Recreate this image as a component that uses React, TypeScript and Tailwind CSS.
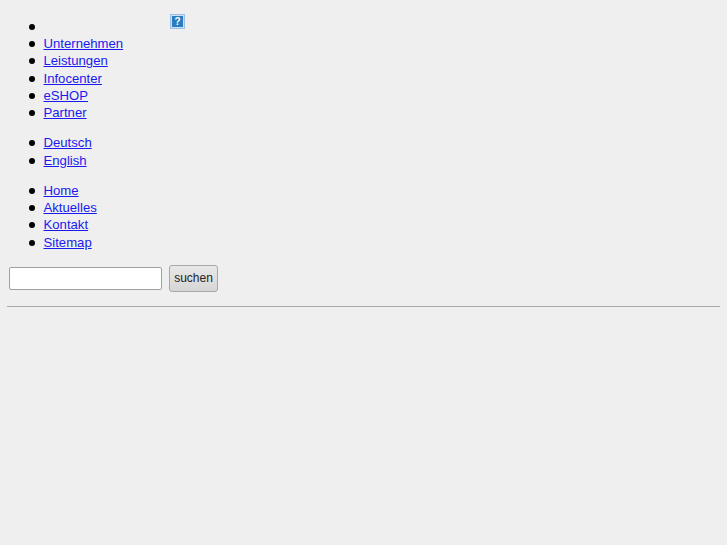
const mainNav = ['Unternehmen', 'Leistungen', 'Infocenter', 'eSHOP', 'Partner'];
const langNav = ['Deutsch', 'English'];
const metaNav = ['Home', 'Aktuelles', 'Kontakt', 'Sitemap'];

function Bullet() {
    return <span className="mr-[9px] h-[6px] w-[6px] shrink-0 rounded-full bg-black" />;
}

function NavLink({ label }: { label: string }) {
    return (
        <li className="flex h-[17.33px] items-center">
            <Bullet />
            <a href="#" className="text-[#1a1aee] underline">{label}</a>
        </li>
    );
}

function HelpIcon() {
    return (
        <svg width="15" height="15" viewBox="0 0 15 15" className="ml-[126.5px] mt-[-4px] self-start">
            <rect x="0.5" y="0.5" width="14" height="14" fill="#cfe0f2" stroke="#9cc0e4" />
            <rect x="2" y="2" width="11" height="11" fill="#2a7cc0" />
            <text x="7.5" y="11" textAnchor="middle" fontSize="10" fontWeight="700" fill="#ffffff" fontFamily="Liberation Sans, sans-serif">?</text>
        </svg>
    );
}

export default function App() {
    return (
        <div className="min-h-[545px] bg-[#efefef] px-[7px] pt-[18px] font-['Liberation_Sans',sans-serif] text-[13.15px] text-black">
            <ul className="pl-[21.5px]">
                <li className="flex h-[17.33px] items-center"><Bullet /><HelpIcon /></li>
                {mainNav.map((label) => <NavLink key={label} label={label} />)}
            </ul>
            <ul className="mt-[12.67px] pl-[21.5px]">
                {langNav.map((label) => <NavLink key={label} label={label} />)}
            </ul>
            <ul className="mt-[12.67px] pl-[21.5px]">
                {metaNav.map((label) => <NavLink key={label} label={label} />)}
            </ul>
            <form className="mt-[13.33px] flex items-center pl-[2px]">
                <input className="h-[23px] w-[153px] rounded-[2px] border border-[#a0a0a0] bg-white" />
                <button type="button" className="ml-[7px] h-[27px] w-[49px] rounded-[3px] border border-[#a8a8a8] bg-gradient-to-b from-[#e8e8e8] to-[#d6d6d6] text-[12px] text-[#222]">suchen</button>
            </form>
            <hr className="mt-[14.5px] border-t border-[#a8a8a8]" />
        </div>
    );
}
